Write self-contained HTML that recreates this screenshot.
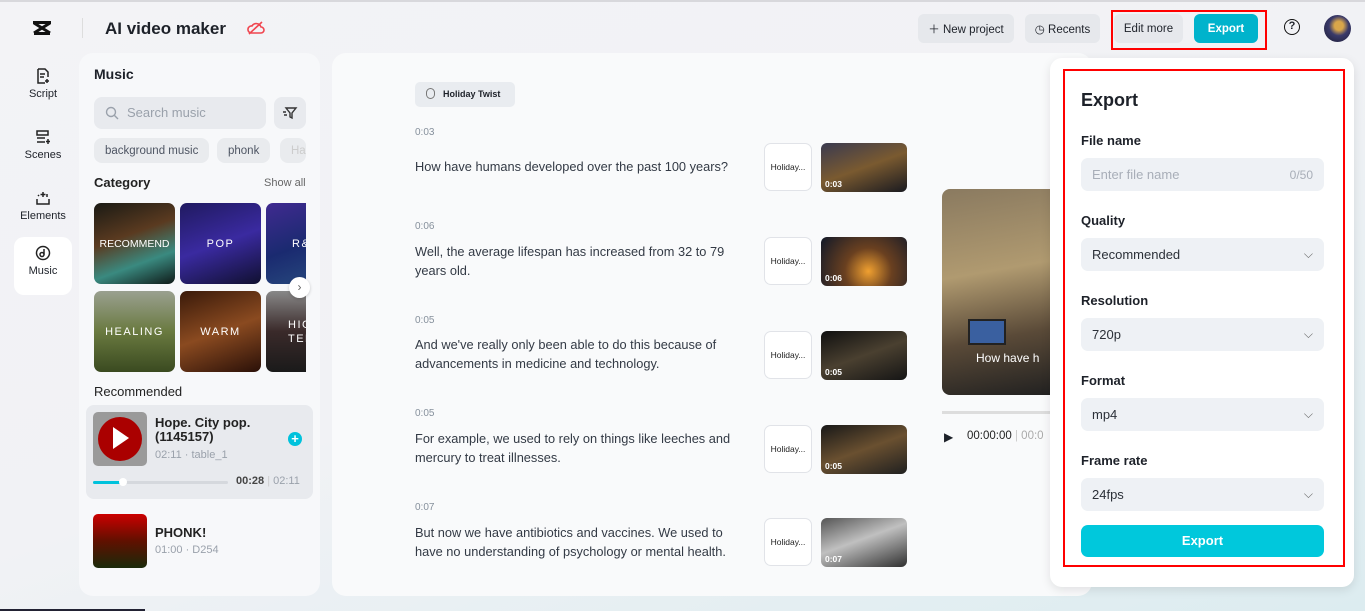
<!DOCTYPE html>
<html><head><meta charset="utf-8"><style>
*{box-sizing:border-box;margin:0;padding:0}
body{width:1365px;height:611px;overflow:hidden;font-family:"Liberation Sans",sans-serif;background:linear-gradient(160deg,#f3f3f6 0%,#f1f2f5 50%,#dcecf0 100%);position:relative;color:#1d2129}
.a{position:absolute}
.btn{position:absolute;background:#e6e8ec;border-radius:6px;font-size:11.5px;display:flex;align-items:center;justify-content:center;color:#1d2129}
.nav{position:absolute;left:14px;width:58px;height:58px;text-align:center;font-size:11px;border-radius:10px}
.nav svg{display:block;margin:8px auto 4px}
.chip{position:absolute;top:138px;height:25px;background:#e9ebee;border-radius:8px;font-size:11.5px;color:#4e5563;display:flex;align-items:center;padding:0 11px}
.cat{position:absolute;width:81px;height:81px;border-radius:7px;color:#fff;font-size:11px;letter-spacing:1.5px;display:flex;align-items:center;justify-content:center;overflow:hidden}
.ts{position:absolute;left:415px;font-size:10px;color:#86909c}
.tx{position:absolute;left:415px;font-size:12.8px;line-height:19px;color:#333a45;width:330px}
.hb{position:absolute;left:764px;width:48px;height:48px;border:1px solid #e1e3e8;border-radius:7px;background:#fff;font-size:8.5px;display:flex;align-items:center;justify-content:center;color:#222}
.th{position:absolute;left:821px;width:86px;height:49px;border-radius:6px;overflow:hidden}
.th span{position:absolute;left:4px;bottom:3px;color:#fff;font-size:8.5px;font-weight:bold}
.lbl{position:absolute;left:1081px;font-size:13px;font-weight:bold;color:#1d2129}
.sel{position:absolute;left:1081px;width:243px;height:33px;background:#eef1f5;border-radius:7px;font-size:13px;color:#2b3038;display:flex;align-items:center;padding:0 11px;justify-content:space-between}
</style></head><body>
<div class="a" style="left:0;top:0;width:1365px;height:2px;background:#d8d8dc"></div>
<svg class="a" style="left:31px;top:20px" width="22" height="16" viewBox="0 0 22 16"><path d="M2 2.5h18M3 13.5h16M3 3l16 10M19 3L3 13" stroke="#111" stroke-width="3" fill="none"/></svg>
<div class="a" style="left:82px;top:18px;width:1px;height:20px;background:#ddd"></div>
<div class="a" style="left:105px;top:19px;font-size:17px;font-weight:bold">AI video maker</div>
<svg class="a" style="left:247px;top:20px" width="18" height="16" viewBox="0 0 18 16"><path d="M4 13h10a3 3 0 0 0 0-6 5 5 0 0 0-9-1 3.5 3.5 0 0 0-1 7zM2 14L15 2" stroke="#f0454f" stroke-width="1.6" fill="none"/></svg>
<div class="btn" style="left:918px;top:14px;width:96px;height:29px">＋ New project</div>
<div class="btn" style="left:1025px;top:14px;width:75px;height:29px">◷ Recents</div>
<div class="btn" style="left:1114px;top:14px;width:69px;height:29px">Edit more</div>
<div class="btn" style="left:1194px;top:14px;width:64px;height:29px;background:#00b3cc;color:#fff;font-weight:bold">Export</div>
<div class="a" style="left:1111px;top:10px;width:156px;height:40px;border:2px solid #f00"></div>
<div class="a" style="left:1284px;top:19px;width:16px;height:16px;border:1.8px solid #111;border-radius:50%;font-size:11px;font-weight:bold;text-align:center;line-height:13px">?</div>
<div class="a" style="left:1324px;top:15px;width:27px;height:27px;border-radius:50%;background:radial-gradient(circle at 55% 40%,#d9a64a 0 20%,#3a3a6a 45%,#1a1a30)"></div>
<div class="nav" style="top:60px"><svg width="16" height="16" viewBox="0 0 16 16"><path d="M3 1h7l3 3v5M3 1v14h7M5 6h5M5 9h4M12 11v4M10 13h4" stroke="#222" stroke-width="1.5" fill="none"/></svg>Script</div>
<div class="nav" style="top:121px"><svg width="16" height="16" viewBox="0 0 16 16"><path d="M2 2h11v4H2zM2 9h8M2 13h8M13 10v5M11 12.5h4" stroke="#222" stroke-width="1.5" fill="none"/></svg>Scenes</div>
<div class="nav" style="top:182px"><svg width="16" height="16" viewBox="0 0 16 16"><path d="M2 9v5h12V9M8 2v5M5.5 4.5h5M4 6l-1-1M12 4v3" stroke="#222" stroke-width="1.5" fill="none"/></svg>Elements</div>
<div class="nav" style="top:237px;background:#fff;height:58px"><svg width="16" height="16" viewBox="0 0 16 16"><circle cx="8" cy="8" r="6.5" stroke="#222" stroke-width="1.5" fill="none"/><circle cx="7" cy="9.5" r="2" stroke="#222" stroke-width="1.5" fill="none"/><path d="M9 9.5V4" stroke="#222" stroke-width="1.5"/></svg>Music</div>
<div class="a" style="left:79px;top:53px;width:241px;height:543px;background:#f7f8fa;border-radius:14px"></div>
<div class="a" style="left:94px;top:66px;font-size:14px;font-weight:bold">Music</div>
<div class="a" style="left:94px;top:97px;width:172px;height:32px;background:#e8eaee;border-radius:8px;font-size:13px;color:#9aa1ab;padding:8px 0 0 33px">Search music</div>
<svg class="a" style="left:105px;top:106px" width="14" height="14" viewBox="0 0 14 14"><circle cx="6" cy="6" r="4.5" stroke="#9aa1ab" stroke-width="1.4" fill="none"/><path d="M9.5 9.5L13 13" stroke="#9aa1ab" stroke-width="1.4"/></svg>
<div class="a" style="left:274px;top:97px;width:32px;height:32px;background:#e8eaee;border-radius:8px"><svg style="margin:8px" width="16" height="16" viewBox="0 0 16 16"><path d="M4 3h10l-4 5v5l-2-1V8zM1 7h3M2 10h3" stroke="#333" stroke-width="1.4" fill="none"/></svg></div>
<div class="chip" style="left:94px">background music</div>
<div class="chip" style="left:217px">phonk</div>
<div class="chip" style="left:280px;width:26px;color:#ccc;overflow:hidden">Ha</div>
<div class="a" style="left:94px;top:175px;font-size:13px;font-weight:bold;color:#222">Category</div>
<div class="a" style="left:264px;top:177px;font-size:11px;color:#666">Show all</div>
<div class="a" style="left:94px;top:203px;width:212px;height:170px;overflow:hidden">
<div class="cat" style="left:0;top:0;background:linear-gradient(160deg,#1a1a14,#5a3a20 40%,#3a8a80 70%,#0f1a18);letter-spacing:0;font-size:10.5px">RECOMMEND</div>
<div class="cat" style="left:86px;top:0;background:linear-gradient(160deg,#201a60,#3a2aa0 50%,#101030)">POP</div>
<div class="cat" style="left:172px;top:0;background:linear-gradient(160deg,#402a90,#1a2a70 50%,#2a5080);justify-content:flex-start;padding-left:26px">R&amp;</div>
<div class="cat" style="left:0;top:88px;background:linear-gradient(180deg,#9aa090,#6a7a40 50%,#3a4a20)">HEALING</div>
<div class="cat" style="left:86px;top:88px;background:linear-gradient(160deg,#3a1a0a,#8a4a20 50%,#2a1008)">WARM</div>
<div class="cat" style="left:172px;top:88px;background:linear-gradient(180deg,#888,#3a2a2a 50%,#1a1a1a);justify-content:flex-start;padding-left:22px;line-height:14px">HIG<br>TEM</div>
</div>
<div class="a" style="left:289px;top:277px;width:21px;height:21px;border-radius:50%;background:#fff;box-shadow:0 1px 3px rgba(0,0,0,.2);font-size:12px;text-align:center;line-height:20px;color:#666">›</div>
<div class="a" style="left:94px;top:384px;font-size:13px;color:#222">Recommended</div>
<div class="a" style="left:86px;top:405px;width:227px;height:94px;background:#e8eaee;border-radius:8px"></div>
<div class="a" style="left:93px;top:412px;width:54px;height:54px;border-radius:5px;background:#9a9a9a;overflow:hidden"><div style="position:absolute;left:5px;top:5px;width:44px;height:44px;border-radius:50%;background:#a00"></div><div style="position:absolute;left:20px;top:15px;width:0;height:0;border-left:16px solid #fff;border-top:11px solid transparent;border-bottom:11px solid transparent"></div></div>
<div class="a" style="left:155px;top:416px;font-size:13px;line-height:14px;font-weight:bold;color:#222">Hope. City pop.<br>(1145157)</div>
<div class="a" style="left:155px;top:449px;font-size:11px;color:#9aa1ab">02:11 · table_1</div>
<div class="a" style="left:288px;top:432px;width:14px;height:14px;border-radius:50%;background:#00c2dc;color:#fff;font-size:13px;font-weight:bold;text-align:center;line-height:14px">+</div>
<div class="a" style="left:93px;top:481px;width:135px;height:3px;background:#d5d8dd;border-radius:2px"></div>
<div class="a" style="left:93px;top:481px;width:30px;height:3px;background:#00c2dc;border-radius:2px"></div>
<div class="a" style="left:119px;top:478px;width:8px;height:8px;background:#fff;border-radius:50%"></div>
<div class="a" style="left:236px;top:475px;font-size:11px;color:#444;font-weight:bold">00:28 <span style="color:#ccc;font-weight:normal">|</span> <span style="color:#9aa1ab;font-weight:normal">02:11</span></div>
<div class="a" style="left:93px;top:514px;width:54px;height:54px;border-radius:5px;background:linear-gradient(180deg,#c00,#601000 50%,#1a2a0a)"></div>
<div class="a" style="left:155px;top:525px;font-size:13px;font-weight:bold;color:#222">PHONK!</div>
<div class="a" style="left:155px;top:544px;font-size:11px;color:#9aa1ab">01:00 · D254</div>
<div class="a" style="left:332px;top:53px;width:760px;height:543px;background:#f9fafb;border-radius:14px"></div>
<div class="a" style="left:415px;top:82px;width:100px;height:25px;background:#e9ecf0;border-radius:5px;font-size:9px;font-weight:bold;padding:7px 0 0 28px">Holiday Twist</div>
<div class="a" style="left:426px;top:88px;width:9px;height:11px;border:1px solid #777;border-radius:5px"></div>
<div class="ts" style="top:127px">0:03</div><div class="tx" style="top:157px">How have humans developed over the past 100 years?</div>
<div class="ts" style="top:221px">0:06</div><div class="tx" style="top:242px">Well, the average lifespan has increased from 32 to 79 years old.</div>
<div class="ts" style="top:315px">0:05</div><div class="tx" style="top:335px">And we've really only been able to do this because of advancements in medicine and technology.</div>
<div class="ts" style="top:408px">0:05</div><div class="tx" style="top:429px">For example, we used to rely on things like leeches and mercury to treat illnesses.</div>
<div class="ts" style="top:502px">0:07</div><div class="tx" style="top:523px">But now we have antibiotics and vaccines. We used to have no understanding of psychology or mental health.</div>
<div class="hb" style="top:143px">Holiday...</div><div class="th" style="top:143px;background:linear-gradient(160deg,#3a3a50,#7a5a30 50%,#1a1a20)"><span>0:03</span></div>
<div class="hb" style="top:237px">Holiday...</div><div class="th" style="top:237px;background:radial-gradient(circle at 55% 70%,#f0a030,#6a4020 40%,#101828)"><span>0:06</span></div>
<div class="hb" style="top:331px">Holiday...</div><div class="th" style="top:331px;background:linear-gradient(160deg,#101010,#4a4030 50%,#151515)"><span>0:05</span></div>
<div class="hb" style="top:425px">Holiday...</div><div class="th" style="top:425px;background:linear-gradient(160deg,#181818,#6a5030 50%,#202020)"><span>0:05</span></div>
<div class="hb" style="top:518px">Holiday...</div><div class="th" style="top:518px;background:linear-gradient(160deg,#555,#c0c0c0 45%,#303030)"><span>0:07</span></div>
<div class="a" style="left:942px;top:189px;width:120px;height:206px;border-radius:8px;background:linear-gradient(170deg,#8a7a60,#b09a70 40%,#5a4a38 70%,#202020);overflow:hidden"><div style="position:absolute;left:26px;top:130px;width:38px;height:26px;background:#3a60a0;border:2px solid #222"></div><div style="position:absolute;left:34px;top:162px;color:#fff;font-size:12px;white-space:nowrap">How have h</div></div>
<div class="a" style="left:942px;top:411px;width:120px;height:3px;background:#ddd"></div>
<div class="a" style="left:944px;top:430px;font-size:12px">▶</div>
<div class="a" style="left:967px;top:430px;font-size:11.5px;color:#222">00:00:00 <span style="color:#ccc">|</span> <span style="color:#aaa">00:0</span></div>
<div class="a" style="left:1050px;top:58px;width:304px;height:529px;background:#fff;border-radius:12px;box-shadow:0 3px 10px rgba(0,0,0,.1)"></div>
<div class="a" style="left:1063px;top:69px;width:282px;height:498px;border:2px solid #f00"></div>
<div class="a" style="left:1081px;top:90px;font-size:18px;font-weight:bold">Export</div>
<div class="lbl" style="top:133px">File name</div>
<div class="sel" style="top:158px;color:#a8aeb8">Enter file name<span style="font-size:12px">0/50</span></div>
<div class="lbl" style="top:213px">Quality</div>
<div class="sel" style="top:238px">Recommended<span style="font-size:12px;color:#666">⌵</span></div>
<div class="lbl" style="top:293px">Resolution</div>
<div class="sel" style="top:318px">720p<span style="font-size:12px;color:#666">⌵</span></div>
<div class="lbl" style="top:373px">Format</div>
<div class="sel" style="top:398px">mp4<span style="font-size:12px;color:#666">⌵</span></div>
<div class="lbl" style="top:453px">Frame rate</div>
<div class="sel" style="top:478px">24fps<span style="font-size:12px;color:#666">⌵</span></div>
<div class="a" style="left:1081px;top:525px;width:243px;height:32px;background:#00c8dc;border-radius:7px;color:#fff;font-size:13px;font-weight:bold;text-align:center;line-height:32px">Export</div>
<div class="a" style="left:0;top:609px;width:145px;height:2px;background:#223"></div>
</body></html>
